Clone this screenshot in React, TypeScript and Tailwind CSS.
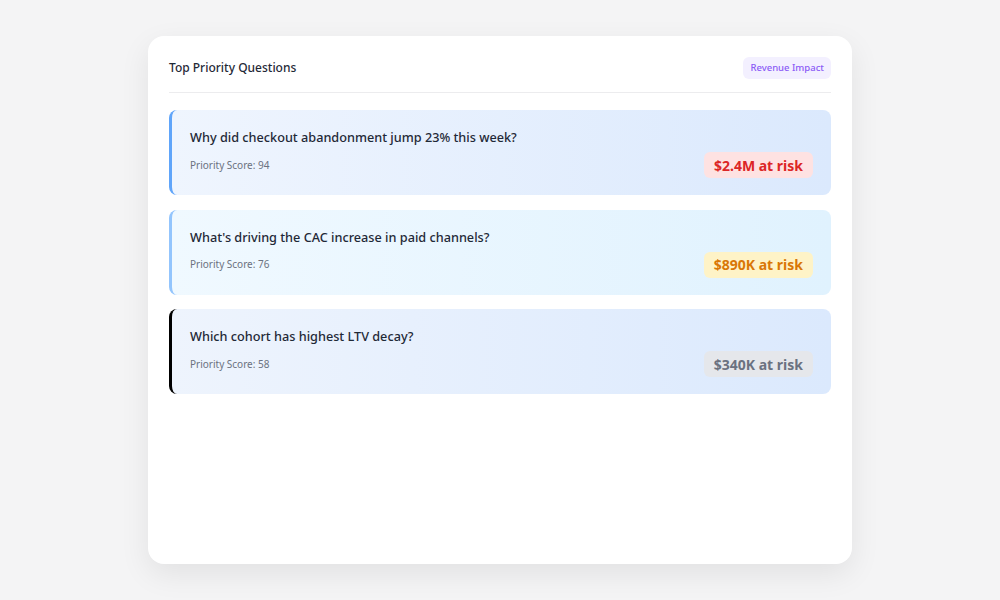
const questions = [
  {
    q: "Why did checkout abandonment jump 23% this week?",
    score: 94,
    risk: "$2.4M at risk",
    border: "border-[#60a5fa]",
    bg: "bg-gradient-to-r from-[#eff5fe] to-[#dbe9fd]",
    badge: "bg-[#fee2e2] text-[#dc2626]",
  },
  {
    q: "What's driving the CAC increase in paid channels?",
    score: 76,
    risk: "$890K at risk",
    border: "border-[#93c5fd]",
    bg: "bg-gradient-to-r from-[#f0f9ff] to-[#e0f2fe]",
    badge: "bg-[#fef3c7] text-[#d97706]",
  },
  {
    q: "Which cohort has highest LTV decay?",
    score: 58,
    risk: "$340K at risk",
    border: "border-black",
    bg: "bg-gradient-to-r from-[#eef4fd] to-[#dbe9fd]",
    badge: "bg-[#e5e7eb] text-[#6b7280]",
  },
];

export default function App() {
  return (
    <div
      className="w-[1000px] h-[600px] bg-[#f4f4f5] pt-9 px-[148px]"
      style={{ fontFamily: '"Noto Sans", "Open Sans", sans-serif' }}
    >
      <div className="h-[528px] bg-white rounded-2xl shadow-[0_10px_30px_rgba(0,0,0,0.08)] px-[21px] pt-[21px]">
        {/* Header */}
        <div className="flex items-center justify-between pb-[13px] border-b border-[#ececee]">
          <p className="text-[12px] font-medium text-[#1f2937]">
            Top Priority Questions
          </p>
          <span className="text-[9.5px] font-medium text-[#8b5cf6] bg-[#f3f0ff] rounded-md px-[7px] py-[4px]">
            Revenue Impact
          </span>
        </div>

        <div className="mt-[17px] flex flex-col gap-[14.5px]">
          {questions.map((item) => (
            <div
              key={item.q}
              className={`h-[85px] rounded-lg border-l-[3px] ${item.border} ${item.bg} px-[18px] pt-[17px]`}
            >
              <p className="text-[12.7px] font-medium text-[#1f2937] leading-5">
                {item.q}
              </p>
              <div className="flex items-center justify-between mt-[5px]">
                <p className="text-[10px] text-[#6b7280]">
                  Priority Score: {item.score}
                </p>
                <span
                  className={`text-[14px] font-bold rounded-md px-[10px] h-[26px] flex items-center ${item.badge}`}
                >
                  {item.risk}
                </span>
              </div>
            </div>
          ))}
        </div>
      </div>
    </div>
  );
}
